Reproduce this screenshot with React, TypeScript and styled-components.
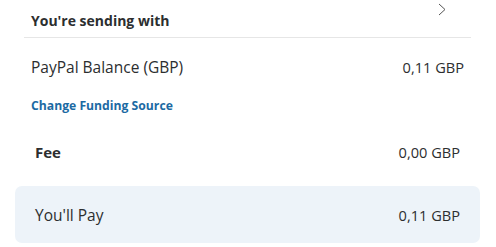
import React from "react";
import styled, { createGlobalStyle } from "styled-components";

const GlobalStyle = createGlobalStyle`
  body {
    margin: 0;
    background: #ffffff;
    font-family: "Open Sans", "Liberation Sans", sans-serif;
    color: #2c2e2f;
  }
`;

const Page = styled.div`
  width: 496px;
  height: 247px;
  box-sizing: border-box;
  padding: 0 16px 0 15px;
  overflow: hidden;
`;

const SendingSection = styled.section`
  margin: 0 9px;
`;

const Header = styled.div`
  height: 38px;
  box-sizing: border-box;
  display: flex;
  align-items: center;
  justify-content: space-between;
  padding: 0 25px 0 7px;
  border-bottom: 1px solid #e6e6e6;
`;

const HeaderTitle = styled.h3`
  margin: 0;
  padding-top: 4px;
  font-size: 14px;
  font-weight: 700;
  color: #2c2e2f;
`;

const Chevron = styled.svg`
  align-self: flex-start;
  margin-top: 3px;
`;

const Row = styled.div<{ $inset: number; $height: number }>`
  display: flex;
  align-items: center;
  justify-content: space-between;
  height: ${(p) => p.$height}px;
  padding: 0 ${(p) => p.$inset}px;
`;

const Label = styled.span<{ $bold?: boolean }>`
  font-size: ${(p) => (p.$bold ? 15 : 15.5)}px;
  font-weight: ${(p) => (p.$bold ? 700 : 400)};
`;

const Amount = styled.span`
  font-size: 14.6px;
`;

const FundingLink = styled.a`
  display: block;
  margin: 1px 7px 0;
  font-size: 12.2px;
  font-weight: 700;
  color: #1c6aa3;
  text-decoration: none;
`;

const Summary = styled.div`
  margin-top: 18px;
`;

const TotalBox = styled.div`
  background: #edf3f9;
  border-radius: 7px;
  height: 57px;
  margin-top: 14px;
  display: flex;
  align-items: center;
`;

const TotalRow = styled(Row)`
  flex: 1;
  padding-top: 1px;
`;

export default function App() {
  return (
    <>
      <GlobalStyle />
      <Page>
        <SendingSection>
          <Header>
            <HeaderTitle>You're sending with</HeaderTitle>
            <Chevron width="8" height="13" viewBox="0 0 8 13">
              <path d="M1 1 L7 6.5 L1 12" fill="none" stroke="#555" strokeWidth="1" />
            </Chevron>
          </Header>
          <Row $inset={7} $height={58}>
            <Label>PayPal Balance (GBP)</Label>
            <Amount>0,11 GBP</Amount>
          </Row>
          <FundingLink href="#">Change Funding Source</FundingLink>
        </SendingSection>
        <Summary>
          <Row $inset={20} $height={40}>
            <Label $bold>Fee</Label>
            <Amount>0,00 GBP</Amount>
          </Row>
          <TotalBox>
            <TotalRow $inset={20} $height={57}>
              <Label>You'll Pay</Label>
              <Amount>0,11 GBP</Amount>
            </TotalRow>
          </TotalBox>
        </Summary>
      </Page>
    </>
  );
}
